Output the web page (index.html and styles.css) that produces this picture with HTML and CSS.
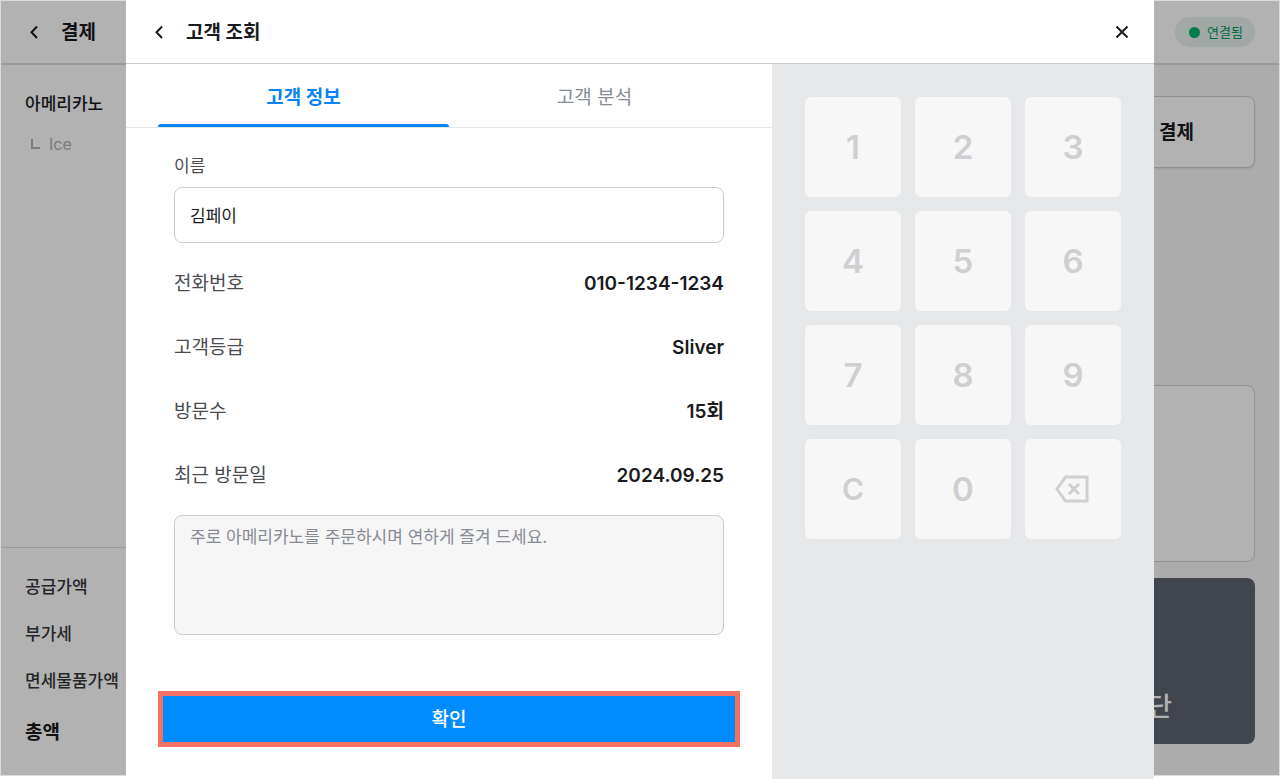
FILE: index.html
```html
<!DOCTYPE html>
<html lang="ko">
<head>
    <meta charset="UTF-8">
    <meta name="viewport" content="width=device-width, initial-scale=1.0">
    <title>고객 조회</title>
    <link rel="stylesheet" href="styles.css">
</head>
<body>
    <div class="app">
        <header class="app-header">
            <button class="icon-btn" type="button" aria-label="뒤로">
                <svg width="24" height="24" viewBox="0 0 24 24"><path d="M16 6.5L10.5 12.3l5.5 5.7"/></svg>
            </button>
            <h1>결제</h1>
            <span class="status">연결됨</span>
        </header>
        <div class="app-body">
            <aside class="order">
                <div class="order-items">
                    <p class="item">아메리카노</p>
                    <p class="option">
                        <svg width="12" height="12" viewBox="0 0 12 12"><path d="M2 1v9h8"/></svg>
                        Ice
                    </p>
                </div>
                <div class="order-sum">
                    <p>공급가액</p>
                    <p>부가세</p>
                    <p>면세물품가액</p>
                    <p class="total">총액</p>
                </div>
            </aside>
            <main class="pay">
                <button class="pay-method" type="button">현장 결제</button>
                <div class="pay-box"></div>
                <button class="pay-stop" type="button">단</button>
            </main>
        </div>
        <div class="dim"></div>
    </div>

    <div class="modal" role="dialog" aria-labelledby="modalTitle">
        <header class="modal-header">
            <button class="icon-btn" type="button" aria-label="뒤로">
                <svg width="24" height="24" viewBox="0 0 24 24"><path d="M16 6.5L10.5 12.3l5.5 5.7"/></svg>
            </button>
            <h2 id="modalTitle">고객 조회</h2>
            <button class="icon-btn close" type="button" aria-label="닫기">
                <svg width="24" height="24" viewBox="0 0 24 24"><path d="M6.5 6.5l11 11M17.5 6.5l-11 11"/></svg>
            </button>
        </header>
        <div class="modal-body">
            <section class="customer">
                <div class="tabs" role="tablist">
                    <button class="tab active" type="button" role="tab" aria-selected="true">고객 정보</button>
                    <button class="tab" type="button" role="tab" aria-selected="false">고객 분석</button>
                </div>
                <form class="form">
                    <label for="name">이름</label>
                    <input type="text" id="name" value="김페이">
                    <dl class="info">
                        <div class="row"><dt>전화번호</dt><dd>010-1234-1234</dd></div>
                        <div class="row"><dt>고객등급</dt><dd>Sliver</dd></div>
                        <div class="row"><dt>방문수</dt><dd>15회</dd></div>
                        <div class="row"><dt>최근 방문일</dt><dd>2024.09.25</dd></div>
                    </dl>
                    <textarea aria-label="메모" readonly>주로 아메리카노를 주문하시며 연하게 즐겨 드세요.</textarea>
                    <button class="confirm" type="button">확인</button>
                </form>
            </section>
            <section class="keypad">
                <button class="key" type="button">1</button>
                <button class="key" type="button">2</button>
                <button class="key" type="button">3</button>
                <button class="key" type="button">4</button>
                <button class="key" type="button">5</button>
                <button class="key" type="button">6</button>
                <button class="key" type="button">7</button>
                <button class="key" type="button">8</button>
                <button class="key" type="button">9</button>
                <button class="key clear" type="button">C</button>
                <button class="key" type="button">0</button>
                <button class="key" type="button" aria-label="지우기">
                    <svg width="36" height="32" viewBox="0 0 36 32"><path d="M10.5 4H32v24H10.5L2 16z"/><path d="M14 11l10 10M24 11l-10 10"/></svg>
                </button>
            </section>
        </div>
    </div>
</body>
</html>
```

FILE: styles.css
```css
* {
    box-sizing: border-box;
    margin: 0;
    padding: 0;
}
body {
    font-family: Inter, "Noto Sans CJK KR", sans-serif;
    font-size: 17px;
    line-height: 24px;
    color: #1a1b1e;
    background: #fff;
}
button, input, textarea {
    font: inherit;
    color: inherit;
    border: none;
    background: none;
}
button {
    cursor: pointer;
}
svg {
    display: block;
    fill: none;
    stroke: currentColor;
    stroke-width: 2;
}
h1, h2 {
    padding-top: 2px;
    font-size: 19px;
    font-weight: 700;
    line-height: 24px;
}
.icon-btn {
    width: 24px;
    height: 24px;
}

/* payment screen behind the dialog */
.app {
    position: relative;
    display: flex;
    flex-direction: column;
    min-height: calc(100vh - 3px);
    border: 1px solid #dadbdc;
}
.app-header {
    display: flex;
    align-items: center;
    gap: 16px;
    height: 64px;
    padding: 0 24px 0 20px;
    border-bottom: 2px solid #dcdddf;
}
.status {
    display: flex;
    align-items: center;
    gap: 7px;
    margin-left: auto;
    padding: 3px 12px 3px 14px;
    border-radius: 15px;
    background: #e9f1ee;
    color: #00a05f;
    font-size: 13px;
}
.status::before {
    content: "";
    width: 11px;
    height: 11px;
    border-radius: 50%;
    background: #00b46c;
}
.app-body {
    flex: 1;
    display: flex;
}
.order {
    display: flex;
    flex-direction: column;
    justify-content: space-between;
    width: 30%;
    font-weight: 500;
}
.order-items {
    padding: 27px 24px;
}
.option {
    display: flex;
    align-items: center;
    gap: 7px;
    margin-top: 16px;
    padding-left: 5px;
    font-size: 16px;
    font-weight: 400;
    color: #b0b2b6;
}
.order-sum {
    display: flex;
    flex-direction: column;
    gap: 23px;
    padding: 27px 24px 30px;
    border-top: 1px solid #dcdddf;
    color: #35373c;
}
.total {
    margin-top: 5px;
    font-size: 19px;
    font-weight: 700;
    color: #1a1b1e;
}
.pay {
    flex: 1;
    display: flex;
    flex-direction: column;
    padding: 31px 24px;
    background: #f6f6f7;
}
.pay-method {
    height: 72px;
    padding: 2px 60px 0 0;
    border: 1px solid #ced0d3;
    border-radius: 8px;
    background: #fff;
    box-shadow: 0 1px 2px #e0e0e0;
    font-size: 19px;
    font-weight: 700;
    text-align: right;
}
.pay-box {
    height: 177px;
    margin-top: auto;
    border: 1px solid #ced0d3;
    border-radius: 8px;
    background: #fff;
}
.pay-stop {
    height: 166px;
    margin-top: 16px;
    padding: 92px 83px 0 0;
    border-radius: 8px;
    background: #5c6370;
    color: #fff;
    font-size: 26px;
    font-weight: 500;
    text-align: right;
}
.dim {
    position: absolute;
    inset: 0;
    background: rgba(0, 0, 0, 0.3);
}

/* customer dialog */
.modal {
    position: fixed;
    inset: 0 126px;
    display: flex;
    flex-direction: column;
    background: #fff;
}
.modal-header {
    display: flex;
    align-items: center;
    gap: 16px;
    height: 64px;
    padding: 0 20px;
    border-bottom: 1px solid #cacbcc;
}
.close {
    margin-left: auto;
}
.modal-body {
    flex: 1;
    display: flex;
}
.customer {
    flex: 1;
}
.tabs {
    display: flex;
    height: 64px;
    padding: 0 32px;
    border-bottom: 1px solid #e5e6e8;
}
.tab {
    flex: 1;
    padding-top: 4px;
    font-size: 19px;
    color: #868b94;
}
.tab.active {
    position: relative;
    font-weight: 700;
    color: #0a84f0;
}
.tab.active::after {
    content: "";
    position: absolute;
    left: 0;
    right: 0;
    bottom: 0;
    height: 3px;
    border-radius: 3px 3px 0 0;
    background: #0a84f0;
}
.form {
    padding: 26px 48px 0;
}
label {
    display: block;
    margin-bottom: 9px;
    color: #4a4c52;
}
input {
    display: block;
    width: 100%;
    height: 56px;
    padding: 0 15px 2px;
    border: 1px solid #cacbcc;
    border-radius: 8px;
}
.info {
    margin: 8px 0;
}
.row {
    display: flex;
    align-items: center;
    justify-content: space-between;
    height: 64px;
    padding-top: 2px;
}
dt {
    font-size: 19px;
    color: #4a4c52;
}
dd {
    font-size: 19px;
    font-weight: 600;
}
textarea {
    display: block;
    width: 100%;
    height: 120px;
    padding: 9px 15px;
    border: 1px solid #cacbcc;
    border-radius: 8px;
    background: #f6f6f6;
    color: #868b94;
    resize: none;
}
.confirm {
    display: block;
    width: calc(100% + 32px);
    height: 56px;
    margin: 56px -16px 0;
    padding-top: 2px;
    border: 5px solid #f37062;
    background: #008cff;
    color: #fff;
    font-size: 19px;
    font-weight: 500;
}
.keypad {
    display: grid;
    grid-template-columns: repeat(3, 1fr);
    grid-auto-rows: 100px;
    align-content: start;
    gap: 14px;
    width: 382px;
    padding: 33px;
    background: #e6e8ea;
}
.key {
    display: flex;
    align-items: center;
    justify-content: center;
    border-radius: 6px;
    background: #f7f7f7;
    color: #cdcfd1;
    font-size: 33px;
    font-weight: 600;
}
.clear {
    font-size: 30px;
}
.key svg {
    stroke-width: 3;
}
```
